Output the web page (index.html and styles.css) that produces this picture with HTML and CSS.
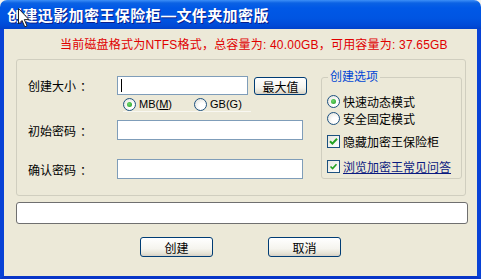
FILE: index.html
```html
<!DOCTYPE html>
<html lang="zh-CN">
<head>
  <meta charset="UTF-8">
  <title>创建迅影加密王保险柜—文件夹加密版</title>
  <link rel="stylesheet" href="styles.css">
</head>
<body>

  <div class="window">
    <div class="titlebar">
      <span class="title">创建迅影加密王保险柜—文件夹加密版</span>
      <svg class="cursor" width="13" height="20" viewBox="0 0 13 20">
        <path d="M0.5 0.5 L0.5 16 L4 12.5 L6.8 18.8 L9 17.8 L6.3 11.6 L11 11.6 Z" fill="#fff" stroke="#222" stroke-width="1"/>
      </svg>
    </div>

    <div class="client">
      <div class="info">当前磁盘格式为NTFS格式，总容量为: 40.00GB，可用容量为: 37.65GB</div>

      <div class="panel">
        <div class="form">
          <div class="row">
            <span class="label">创建大小<span class="colon">：</span></span>
            <div class="field size"><span class="caret"></span></div>
            <button class="btn small">最大值</button>
          </div>
          <div class="units">
            <span class="radio checked"></span><span class="unit">MB(<u>M</u>)</span>
            <span class="radio gap"></span><span class="unit">GB(G)</span>
          </div>
          <div class="row second">
            <span class="label">初始密码<span class="colon">：</span></span>
            <div class="field long"></div>
          </div>
          <div class="row third">
            <span class="label">确认密码<span class="colon">：</span></span>
            <div class="field long"></div>
          </div>
        </div>

        <fieldset class="options">
          <legend>创建选项</legend>
          <div class="opt"><span class="radio checked"></span>快速动态模式</div>
          <div class="opt"><span class="radio"></span>安全固定模式</div>
          <div class="opt check-row">
            <span class="check">
              <svg width="9" height="9" viewBox="0 0 9 9"><path d="M1 4.2 L3.4 6.6 L8 1.8" fill="none" stroke="#21a121" stroke-width="2"/></svg>
            </span>隐藏加密王保险柜
          </div>
          <div class="opt link-row">
            <span class="check">
              <svg width="9" height="9" viewBox="0 0 9 9"><path d="M1.5 4.5 L3.6 6.5 L7.5 2.2" fill="none" stroke="#21a121" stroke-width="1.6"/></svg>
            </span><a href="#" class="link">浏览加密王常见问答</a>
          </div>
        </fieldset>
      </div>

      <div class="status"></div>

      <div class="actions">
        <button class="btn">创建</button>
        <button class="btn">取消</button>
      </div>
    </div>
  </div>

</body>
</html>
```

FILE: styles.css
```css
body {
  margin: 0;
  background: #f4f3ee;
  font-family: "Liberation Sans", "Noto Sans CJK SC", sans-serif;
  font-size: 12px;
}

.window {
  width: 481px;
  height: 279px;
  display: flex;
  flex-direction: column;
}

.titlebar {
  position: relative;
  height: 29px;
  flex-shrink: 0;
  border-radius: 7px 7px 0 0;
  background: linear-gradient(#3d8ff7 0, #0b62e4 3px, #0058e6 8px, #0055e2 18px, #004bd8 25px, #0041cb 29px);
  display: flex;
  align-items: center;
  padding-left: 7px;
}

.title {
  color: #fff;
  font-weight: bold;
  font-size: 15px;
  letter-spacing: 0.4px;
  text-shadow: 1px 1px 0 #0a1e8c;
}

.cursor {
  position: absolute;
  left: 18px;
  top: 8px;
}

.client {
  flex: 1;
  background: #ece9d8;
  border-left: 4px solid #0842d6;
  border-right: 4px solid #0842d6;
  border-bottom: 3px solid #0835c8;
  display: flex;
  flex-direction: column;
}

.info {
  color: #e00000;
  line-height: 16px;
  letter-spacing: 0.2px;
  margin: 8px 0 0 56px;
}

.panel {
  margin: 6px 0 0 12px;
  width: 450px;
  height: 137px;
  border: 1px solid #d0cebf;
  border-radius: 3px;
  display: flex;
  padding: 10px 0 0 11px;
  box-sizing: border-box;
}

.form {
  width: 293px;
  margin-top: 6px;
}

.row {
  display: flex;
  align-items: center;
}

.label {
  width: 89px;
  color: #000;
}

.colon {
  margin-left: 4px;
}

.field {
  background: #fff;
  border: 1px solid #7f9db9;
  box-sizing: border-box;
  display: flex;
  align-items: center;
}

.field.size {
  width: 131px;
  height: 19px;
}

.field.long {
  width: 186px;
  height: 20px;
}

.caret {
  width: 1px;
  height: 13px;
  margin-left: 3px;
  background: #000;
}

.btn {
  font-family: inherit;
  font-size: 12px;
  color: #000;
  width: 73px;
  height: 20px;
  padding: 0;
  border: 1px solid #003c74;
  border-radius: 3px;
  background: linear-gradient(#ffffff 0, #f5f4ee 60%, #e6e3d6 85%, #d6d0c5 100%);
}

.btn.small {
  width: 53px;
  height: 18px;
  margin-left: 6px;
}

.units {
  display: flex;
  align-items: center;
  height: 12px;
  margin: 3px 0 0 95px;
  width: 128px;
  border-bottom: 1px solid #f8f7f1;
  padding-bottom: 1px;
}

.unit {
  margin-left: 3px;
  font-size: 11px;
  color: #000;
}

.radio.gap {
  margin-left: 22px;
}

.row.second {
  margin-top: 8px;
}

.row.third {
  margin-top: 19px;
}

.radio {
  width: 11px;
  height: 11px;
  border: 1px solid #1c5180;
  border-radius: 50%;
  background: radial-gradient(circle at 65% 65%, #fff 30%, #dcdcd4 100%);
  display: inline-flex;
  align-items: center;
  justify-content: center;
  flex-shrink: 0;
}

.radio.checked::after {
  content: "";
  width: 5px;
  height: 5px;
  border-radius: 50%;
  background: radial-gradient(circle at 40% 40%, #6fd86f, #1e9a1e);
}

.options {
  width: 141px;
  height: 109px;
  box-sizing: border-box;
  margin: 0;
  padding: 8px 0 0 5px;
  border: 1px solid #d0cebf;
  border-radius: 3px;
}

.options legend {
  color: #0046d5;
  padding: 0 2px;
  margin-left: 1px;
  line-height: 15px;
}

.opt {
  display: flex;
  align-items: center;
  height: 17px;
  gap: 3px;
  color: #000;
}

.opt.check-row {
  margin-top: 6px;
}

.opt.link-row {
  margin-top: 8px;
}

.check {
  width: 11px;
  height: 11px;
  border: 1px solid #1c5180;
  background: linear-gradient(135deg, #e6e6de, #fff);
  display: inline-flex;
  align-items: center;
  justify-content: center;
  flex-shrink: 0;
}

.link {
  color: #0b1a80;
  text-decoration: underline;
}

.status {
  margin: 6px 0 0 12px;
  width: 452px;
  height: 22px;
  box-sizing: border-box;
  background: #fff;
  border: 1px solid #6f6f6f;
  border-radius: 3px;
}

.actions {
  display: flex;
  justify-content: center;
  gap: 55px;
  margin-top: 13px;
}
```
